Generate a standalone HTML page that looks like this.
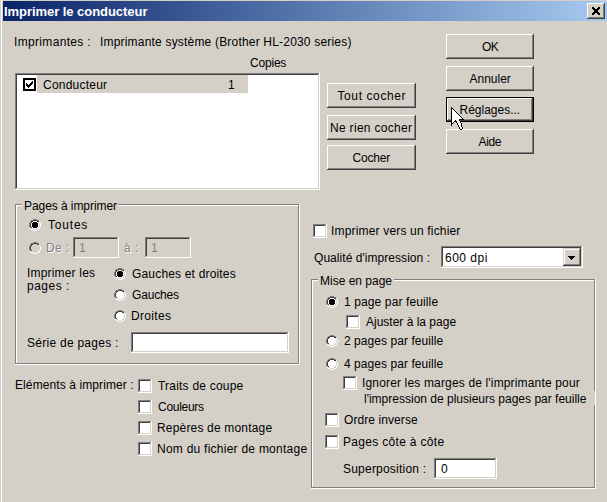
<!DOCTYPE html><html><head><meta charset="utf-8"><style>

html,body{margin:0;padding:0}
body{width:607px;height:502px;background:#D4D0C8;position:relative;overflow:hidden;font-family:'Liberation Sans', sans-serif;font-size:12px;color:#000}
.t{position:absolute;white-space:pre;line-height:13px}
.btn{position:absolute;background:#D4D0C8;box-shadow:inset -1px -1px #404040,inset 1px 1px #fff,inset -2px -2px #808080}
.sunk{position:absolute;box-shadow:inset -1px -1px #fff,inset 1px 1px #808080,inset -2px -2px #D4D0C8,inset 2px 2px #404040}
.ic{position:absolute;display:block}

</style></head><body>
<div style="position:absolute;left:1px;top:0px;width:1px;height:502px;background:#fff;"></div>
<div style="position:absolute;left:3px;top:1px;width:604px;height:20px;background:linear-gradient(to right,#0A246A,#A6CAF0)"></div>
<div class="btn" style="left:587px;top:3px;width:18px;height:16px"></div>
<svg class="ic" style="left:592px;top:7px" width="8" height="8" shape-rendering="crispEdges"><rect x="0" y="0" width="2" height="1"/><rect x="6" y="0" width="2" height="1"/><rect x="0" y="1" width="3" height="1"/><rect x="5" y="1" width="3" height="1"/><rect x="1" y="2" width="6" height="1"/><rect x="2" y="3" width="4" height="1"/><rect x="2" y="4" width="4" height="1"/><rect x="1" y="5" width="6" height="1"/><rect x="0" y="6" width="3" height="1"/><rect x="5" y="6" width="3" height="1"/><rect x="0" y="7" width="2" height="1"/><rect x="6" y="7" width="2" height="1"/></svg>
<div class="sunk" style="left:15px;top:73px;width:305px;height:117px;background:#fff"></div>
<div style="position:absolute;left:37px;top:75px;width:211px;height:18px;background:#D4D0C8;"></div>
<div style="position:absolute;left:23px;top:78px;width:13px;height:13px;background:#000;"></div>
<div style="position:absolute;left:25px;top:80px;width:9px;height:9px;background:#fff;"></div>
<svg class="ic" style="left:26px;top:81px" width="7" height="7" shape-rendering="crispEdges"><rect x="6" y="0" width="1" height="1"/><rect x="5" y="1" width="1" height="1"/><rect x="6" y="1" width="1" height="1"/><rect x="0" y="2" width="1" height="1"/><rect x="4" y="2" width="1" height="1"/><rect x="5" y="2" width="1" height="1"/><rect x="6" y="2" width="1" height="1"/><rect x="0" y="3" width="1" height="1"/><rect x="1" y="3" width="1" height="1"/><rect x="3" y="3" width="1" height="1"/><rect x="4" y="3" width="1" height="1"/><rect x="5" y="3" width="1" height="1"/><rect x="0" y="4" width="1" height="1"/><rect x="1" y="4" width="1" height="1"/><rect x="2" y="4" width="1" height="1"/><rect x="3" y="4" width="1" height="1"/><rect x="4" y="4" width="1" height="1"/><rect x="1" y="5" width="1" height="1"/><rect x="2" y="5" width="1" height="1"/><rect x="3" y="5" width="1" height="1"/><rect x="2" y="6" width="1" height="1"/></svg>
<div class="btn" style="left:327px;top:83px;width:89px;height:25px"></div>
<div class="btn" style="left:327px;top:115px;width:89px;height:25px"></div>
<div class="btn" style="left:327px;top:145px;width:89px;height:25px"></div>
<div class="btn" style="left:446px;top:34px;width:88px;height:25px"></div>
<div class="btn" style="left:446px;top:66px;width:88px;height:25px"></div>
<div class="btn" style="left:446px;top:129px;width:88px;height:25px"></div>
<div style="position:absolute;left:446px;top:97px;width:88px;height:25px;background:#000;"></div><div class="btn" style="left:447px;top:98px;width:86px;height:23px"></div>
<div style="position:absolute;left:15px;top:204px;width:284px;height:1px;background:#808080;"></div><div style="position:absolute;left:15px;top:204px;width:1px;height:160px;background:#808080;"></div><div style="position:absolute;left:15px;top:364px;width:285px;height:1px;background:#fff;"></div><div style="position:absolute;left:299px;top:204px;width:1px;height:161px;background:#fff;"></div><div style="position:absolute;left:16px;top:205px;width:282px;height:1px;background:#fff;"></div><div style="position:absolute;left:16px;top:205px;width:1px;height:158px;background:#fff;"></div><div style="position:absolute;left:16px;top:363px;width:283px;height:1px;background:#808080;"></div><div style="position:absolute;left:298px;top:205px;width:1px;height:159px;background:#808080;"></div><div style="position:absolute;left:22px;top:202px;width:96px;height:6px;background:#D4D0C8;"></div>
<svg class="ic" style="left:29px;top:219px" width="12" height="12" shape-rendering="crispEdges"><rect x="4" y="0" width="4" height="1" fill="#808080"/><rect x="2" y="1" width="2" height="1" fill="#808080"/><rect x="4" y="1" width="4" height="1" fill="#404040"/><rect x="8" y="1" width="2" height="1" fill="#808080"/><rect x="1" y="2" width="1" height="1" fill="#808080"/><rect x="2" y="2" width="2" height="1" fill="#404040"/><rect x="4" y="2" width="4" height="1" fill="#fff"/><rect x="8" y="2" width="2" height="1" fill="#404040"/><rect x="10" y="2" width="1" height="1" fill="#D4D0C8"/><rect x="1" y="3" width="1" height="1" fill="#808080"/><rect x="2" y="3" width="1" height="1" fill="#404040"/><rect x="3" y="3" width="6" height="1" fill="#fff"/><rect x="9" y="3" width="1" height="1" fill="#D4D0C8"/><rect x="10" y="3" width="1" height="1" fill="#fff"/><rect x="0" y="4" width="1" height="1" fill="#808080"/><rect x="1" y="4" width="1" height="1" fill="#404040"/><rect x="2" y="4" width="8" height="1" fill="#fff"/><rect x="10" y="4" width="1" height="1" fill="#D4D0C8"/><rect x="11" y="4" width="1" height="1" fill="#fff"/><rect x="0" y="5" width="1" height="1" fill="#808080"/><rect x="1" y="5" width="1" height="1" fill="#404040"/><rect x="2" y="5" width="8" height="1" fill="#fff"/><rect x="10" y="5" width="1" height="1" fill="#D4D0C8"/><rect x="11" y="5" width="1" height="1" fill="#fff"/><rect x="0" y="6" width="1" height="1" fill="#808080"/><rect x="1" y="6" width="1" height="1" fill="#404040"/><rect x="2" y="6" width="8" height="1" fill="#fff"/><rect x="10" y="6" width="1" height="1" fill="#D4D0C8"/><rect x="11" y="6" width="1" height="1" fill="#fff"/><rect x="0" y="7" width="1" height="1" fill="#808080"/><rect x="1" y="7" width="1" height="1" fill="#404040"/><rect x="2" y="7" width="8" height="1" fill="#fff"/><rect x="10" y="7" width="1" height="1" fill="#D4D0C8"/><rect x="11" y="7" width="1" height="1" fill="#fff"/><rect x="1" y="8" width="1" height="1" fill="#808080"/><rect x="2" y="8" width="1" height="1" fill="#404040"/><rect x="3" y="8" width="6" height="1" fill="#fff"/><rect x="9" y="8" width="1" height="1" fill="#D4D0C8"/><rect x="10" y="8" width="1" height="1" fill="#fff"/><rect x="1" y="9" width="1" height="1" fill="#fff"/><rect x="2" y="9" width="2" height="1" fill="#D4D0C8"/><rect x="4" y="9" width="4" height="1" fill="#fff"/><rect x="8" y="9" width="2" height="1" fill="#D4D0C8"/><rect x="10" y="9" width="1" height="1" fill="#fff"/><rect x="2" y="10" width="2" height="1" fill="#fff"/><rect x="4" y="10" width="4" height="1" fill="#D4D0C8"/><rect x="8" y="10" width="2" height="1" fill="#fff"/><rect x="4" y="11" width="4" height="1" fill="#fff"/><rect x="4" y="3" width="4" height="1" fill="#000"/><rect x="3" y="4" width="6" height="1" fill="#000"/><rect x="3" y="5" width="6" height="1" fill="#000"/><rect x="3" y="6" width="6" height="1" fill="#000"/><rect x="3" y="7" width="6" height="1" fill="#000"/><rect x="4" y="8" width="4" height="1" fill="#000"/></svg>
<svg class="ic" style="left:29px;top:242px" width="12" height="12" shape-rendering="crispEdges"><rect x="4" y="0" width="4" height="1" fill="#808080"/><rect x="2" y="1" width="2" height="1" fill="#808080"/><rect x="4" y="1" width="4" height="1" fill="#404040"/><rect x="8" y="1" width="2" height="1" fill="#808080"/><rect x="1" y="2" width="1" height="1" fill="#808080"/><rect x="2" y="2" width="2" height="1" fill="#404040"/><rect x="4" y="2" width="4" height="1" fill="#D4D0C8"/><rect x="8" y="2" width="2" height="1" fill="#404040"/><rect x="10" y="2" width="1" height="1" fill="#D4D0C8"/><rect x="1" y="3" width="1" height="1" fill="#808080"/><rect x="2" y="3" width="1" height="1" fill="#404040"/><rect x="3" y="3" width="6" height="1" fill="#D4D0C8"/><rect x="9" y="3" width="1" height="1" fill="#D4D0C8"/><rect x="10" y="3" width="1" height="1" fill="#fff"/><rect x="0" y="4" width="1" height="1" fill="#808080"/><rect x="1" y="4" width="1" height="1" fill="#404040"/><rect x="2" y="4" width="8" height="1" fill="#D4D0C8"/><rect x="10" y="4" width="1" height="1" fill="#D4D0C8"/><rect x="11" y="4" width="1" height="1" fill="#fff"/><rect x="0" y="5" width="1" height="1" fill="#808080"/><rect x="1" y="5" width="1" height="1" fill="#404040"/><rect x="2" y="5" width="8" height="1" fill="#D4D0C8"/><rect x="10" y="5" width="1" height="1" fill="#D4D0C8"/><rect x="11" y="5" width="1" height="1" fill="#fff"/><rect x="0" y="6" width="1" height="1" fill="#808080"/><rect x="1" y="6" width="1" height="1" fill="#404040"/><rect x="2" y="6" width="8" height="1" fill="#D4D0C8"/><rect x="10" y="6" width="1" height="1" fill="#D4D0C8"/><rect x="11" y="6" width="1" height="1" fill="#fff"/><rect x="0" y="7" width="1" height="1" fill="#808080"/><rect x="1" y="7" width="1" height="1" fill="#404040"/><rect x="2" y="7" width="8" height="1" fill="#D4D0C8"/><rect x="10" y="7" width="1" height="1" fill="#D4D0C8"/><rect x="11" y="7" width="1" height="1" fill="#fff"/><rect x="1" y="8" width="1" height="1" fill="#808080"/><rect x="2" y="8" width="1" height="1" fill="#404040"/><rect x="3" y="8" width="6" height="1" fill="#D4D0C8"/><rect x="9" y="8" width="1" height="1" fill="#D4D0C8"/><rect x="10" y="8" width="1" height="1" fill="#fff"/><rect x="1" y="9" width="1" height="1" fill="#fff"/><rect x="2" y="9" width="2" height="1" fill="#D4D0C8"/><rect x="4" y="9" width="4" height="1" fill="#D4D0C8"/><rect x="8" y="9" width="2" height="1" fill="#D4D0C8"/><rect x="10" y="9" width="1" height="1" fill="#fff"/><rect x="2" y="10" width="2" height="1" fill="#fff"/><rect x="4" y="10" width="4" height="1" fill="#D4D0C8"/><rect x="8" y="10" width="2" height="1" fill="#fff"/><rect x="4" y="11" width="4" height="1" fill="#fff"/></svg>
<div class="sunk" style="left:73px;top:237px;width:46px;height:21px;background:#D4D0C8"></div>
<div class="sunk" style="left:145px;top:237px;width:46px;height:21px;background:#D4D0C8"></div>
<svg class="ic" style="left:114px;top:268px" width="12" height="12" shape-rendering="crispEdges"><rect x="4" y="0" width="4" height="1" fill="#808080"/><rect x="2" y="1" width="2" height="1" fill="#808080"/><rect x="4" y="1" width="4" height="1" fill="#404040"/><rect x="8" y="1" width="2" height="1" fill="#808080"/><rect x="1" y="2" width="1" height="1" fill="#808080"/><rect x="2" y="2" width="2" height="1" fill="#404040"/><rect x="4" y="2" width="4" height="1" fill="#fff"/><rect x="8" y="2" width="2" height="1" fill="#404040"/><rect x="10" y="2" width="1" height="1" fill="#D4D0C8"/><rect x="1" y="3" width="1" height="1" fill="#808080"/><rect x="2" y="3" width="1" height="1" fill="#404040"/><rect x="3" y="3" width="6" height="1" fill="#fff"/><rect x="9" y="3" width="1" height="1" fill="#D4D0C8"/><rect x="10" y="3" width="1" height="1" fill="#fff"/><rect x="0" y="4" width="1" height="1" fill="#808080"/><rect x="1" y="4" width="1" height="1" fill="#404040"/><rect x="2" y="4" width="8" height="1" fill="#fff"/><rect x="10" y="4" width="1" height="1" fill="#D4D0C8"/><rect x="11" y="4" width="1" height="1" fill="#fff"/><rect x="0" y="5" width="1" height="1" fill="#808080"/><rect x="1" y="5" width="1" height="1" fill="#404040"/><rect x="2" y="5" width="8" height="1" fill="#fff"/><rect x="10" y="5" width="1" height="1" fill="#D4D0C8"/><rect x="11" y="5" width="1" height="1" fill="#fff"/><rect x="0" y="6" width="1" height="1" fill="#808080"/><rect x="1" y="6" width="1" height="1" fill="#404040"/><rect x="2" y="6" width="8" height="1" fill="#fff"/><rect x="10" y="6" width="1" height="1" fill="#D4D0C8"/><rect x="11" y="6" width="1" height="1" fill="#fff"/><rect x="0" y="7" width="1" height="1" fill="#808080"/><rect x="1" y="7" width="1" height="1" fill="#404040"/><rect x="2" y="7" width="8" height="1" fill="#fff"/><rect x="10" y="7" width="1" height="1" fill="#D4D0C8"/><rect x="11" y="7" width="1" height="1" fill="#fff"/><rect x="1" y="8" width="1" height="1" fill="#808080"/><rect x="2" y="8" width="1" height="1" fill="#404040"/><rect x="3" y="8" width="6" height="1" fill="#fff"/><rect x="9" y="8" width="1" height="1" fill="#D4D0C8"/><rect x="10" y="8" width="1" height="1" fill="#fff"/><rect x="1" y="9" width="1" height="1" fill="#fff"/><rect x="2" y="9" width="2" height="1" fill="#D4D0C8"/><rect x="4" y="9" width="4" height="1" fill="#fff"/><rect x="8" y="9" width="2" height="1" fill="#D4D0C8"/><rect x="10" y="9" width="1" height="1" fill="#fff"/><rect x="2" y="10" width="2" height="1" fill="#fff"/><rect x="4" y="10" width="4" height="1" fill="#D4D0C8"/><rect x="8" y="10" width="2" height="1" fill="#fff"/><rect x="4" y="11" width="4" height="1" fill="#fff"/><rect x="4" y="3" width="4" height="1" fill="#000"/><rect x="3" y="4" width="6" height="1" fill="#000"/><rect x="3" y="5" width="6" height="1" fill="#000"/><rect x="3" y="6" width="6" height="1" fill="#000"/><rect x="3" y="7" width="6" height="1" fill="#000"/><rect x="4" y="8" width="4" height="1" fill="#000"/></svg>
<svg class="ic" style="left:114px;top:289px" width="12" height="12" shape-rendering="crispEdges"><rect x="4" y="0" width="4" height="1" fill="#808080"/><rect x="2" y="1" width="2" height="1" fill="#808080"/><rect x="4" y="1" width="4" height="1" fill="#404040"/><rect x="8" y="1" width="2" height="1" fill="#808080"/><rect x="1" y="2" width="1" height="1" fill="#808080"/><rect x="2" y="2" width="2" height="1" fill="#404040"/><rect x="4" y="2" width="4" height="1" fill="#fff"/><rect x="8" y="2" width="2" height="1" fill="#404040"/><rect x="10" y="2" width="1" height="1" fill="#D4D0C8"/><rect x="1" y="3" width="1" height="1" fill="#808080"/><rect x="2" y="3" width="1" height="1" fill="#404040"/><rect x="3" y="3" width="6" height="1" fill="#fff"/><rect x="9" y="3" width="1" height="1" fill="#D4D0C8"/><rect x="10" y="3" width="1" height="1" fill="#fff"/><rect x="0" y="4" width="1" height="1" fill="#808080"/><rect x="1" y="4" width="1" height="1" fill="#404040"/><rect x="2" y="4" width="8" height="1" fill="#fff"/><rect x="10" y="4" width="1" height="1" fill="#D4D0C8"/><rect x="11" y="4" width="1" height="1" fill="#fff"/><rect x="0" y="5" width="1" height="1" fill="#808080"/><rect x="1" y="5" width="1" height="1" fill="#404040"/><rect x="2" y="5" width="8" height="1" fill="#fff"/><rect x="10" y="5" width="1" height="1" fill="#D4D0C8"/><rect x="11" y="5" width="1" height="1" fill="#fff"/><rect x="0" y="6" width="1" height="1" fill="#808080"/><rect x="1" y="6" width="1" height="1" fill="#404040"/><rect x="2" y="6" width="8" height="1" fill="#fff"/><rect x="10" y="6" width="1" height="1" fill="#D4D0C8"/><rect x="11" y="6" width="1" height="1" fill="#fff"/><rect x="0" y="7" width="1" height="1" fill="#808080"/><rect x="1" y="7" width="1" height="1" fill="#404040"/><rect x="2" y="7" width="8" height="1" fill="#fff"/><rect x="10" y="7" width="1" height="1" fill="#D4D0C8"/><rect x="11" y="7" width="1" height="1" fill="#fff"/><rect x="1" y="8" width="1" height="1" fill="#808080"/><rect x="2" y="8" width="1" height="1" fill="#404040"/><rect x="3" y="8" width="6" height="1" fill="#fff"/><rect x="9" y="8" width="1" height="1" fill="#D4D0C8"/><rect x="10" y="8" width="1" height="1" fill="#fff"/><rect x="1" y="9" width="1" height="1" fill="#fff"/><rect x="2" y="9" width="2" height="1" fill="#D4D0C8"/><rect x="4" y="9" width="4" height="1" fill="#fff"/><rect x="8" y="9" width="2" height="1" fill="#D4D0C8"/><rect x="10" y="9" width="1" height="1" fill="#fff"/><rect x="2" y="10" width="2" height="1" fill="#fff"/><rect x="4" y="10" width="4" height="1" fill="#D4D0C8"/><rect x="8" y="10" width="2" height="1" fill="#fff"/><rect x="4" y="11" width="4" height="1" fill="#fff"/></svg>
<svg class="ic" style="left:114px;top:310px" width="12" height="12" shape-rendering="crispEdges"><rect x="4" y="0" width="4" height="1" fill="#808080"/><rect x="2" y="1" width="2" height="1" fill="#808080"/><rect x="4" y="1" width="4" height="1" fill="#404040"/><rect x="8" y="1" width="2" height="1" fill="#808080"/><rect x="1" y="2" width="1" height="1" fill="#808080"/><rect x="2" y="2" width="2" height="1" fill="#404040"/><rect x="4" y="2" width="4" height="1" fill="#fff"/><rect x="8" y="2" width="2" height="1" fill="#404040"/><rect x="10" y="2" width="1" height="1" fill="#D4D0C8"/><rect x="1" y="3" width="1" height="1" fill="#808080"/><rect x="2" y="3" width="1" height="1" fill="#404040"/><rect x="3" y="3" width="6" height="1" fill="#fff"/><rect x="9" y="3" width="1" height="1" fill="#D4D0C8"/><rect x="10" y="3" width="1" height="1" fill="#fff"/><rect x="0" y="4" width="1" height="1" fill="#808080"/><rect x="1" y="4" width="1" height="1" fill="#404040"/><rect x="2" y="4" width="8" height="1" fill="#fff"/><rect x="10" y="4" width="1" height="1" fill="#D4D0C8"/><rect x="11" y="4" width="1" height="1" fill="#fff"/><rect x="0" y="5" width="1" height="1" fill="#808080"/><rect x="1" y="5" width="1" height="1" fill="#404040"/><rect x="2" y="5" width="8" height="1" fill="#fff"/><rect x="10" y="5" width="1" height="1" fill="#D4D0C8"/><rect x="11" y="5" width="1" height="1" fill="#fff"/><rect x="0" y="6" width="1" height="1" fill="#808080"/><rect x="1" y="6" width="1" height="1" fill="#404040"/><rect x="2" y="6" width="8" height="1" fill="#fff"/><rect x="10" y="6" width="1" height="1" fill="#D4D0C8"/><rect x="11" y="6" width="1" height="1" fill="#fff"/><rect x="0" y="7" width="1" height="1" fill="#808080"/><rect x="1" y="7" width="1" height="1" fill="#404040"/><rect x="2" y="7" width="8" height="1" fill="#fff"/><rect x="10" y="7" width="1" height="1" fill="#D4D0C8"/><rect x="11" y="7" width="1" height="1" fill="#fff"/><rect x="1" y="8" width="1" height="1" fill="#808080"/><rect x="2" y="8" width="1" height="1" fill="#404040"/><rect x="3" y="8" width="6" height="1" fill="#fff"/><rect x="9" y="8" width="1" height="1" fill="#D4D0C8"/><rect x="10" y="8" width="1" height="1" fill="#fff"/><rect x="1" y="9" width="1" height="1" fill="#fff"/><rect x="2" y="9" width="2" height="1" fill="#D4D0C8"/><rect x="4" y="9" width="4" height="1" fill="#fff"/><rect x="8" y="9" width="2" height="1" fill="#D4D0C8"/><rect x="10" y="9" width="1" height="1" fill="#fff"/><rect x="2" y="10" width="2" height="1" fill="#fff"/><rect x="4" y="10" width="4" height="1" fill="#D4D0C8"/><rect x="8" y="10" width="2" height="1" fill="#fff"/><rect x="4" y="11" width="4" height="1" fill="#fff"/></svg>
<div class="sunk" style="left:131px;top:332px;width:158px;height:21px;background:#fff"></div>
<div class="sunk" style="left:138px;top:379px;width:14px;height:14px;background:#fff"></div>
<div class="sunk" style="left:138px;top:400px;width:14px;height:14px;background:#fff"></div>
<div class="sunk" style="left:138px;top:421px;width:14px;height:14px;background:#fff"></div>
<div class="sunk" style="left:138px;top:442px;width:14px;height:14px;background:#fff"></div>
<div class="sunk" style="left:313px;top:224px;width:14px;height:14px;background:#fff"></div>
<div class="sunk" style="left:441px;top:246px;width:142px;height:22px;background:#fff"></div>
<div style="position:absolute;left:563px;top:248px;width:18px;height:18px;background:#D4D0C8;box-shadow:inset -1px -1px #404040,inset 1px 1px #D4D0C8,inset -2px -2px #808080,inset 2px 2px #fff"></div>
<svg class="ic" style="left:568px;top:256px" width="7" height="4" shape-rendering="crispEdges"><rect x="0" y="0" width="7" height="1"/><rect x="1" y="1" width="5" height="1"/><rect x="2" y="2" width="3" height="1"/><rect x="3" y="3" width="1" height="1"/></svg>
<div style="position:absolute;left:311px;top:279px;width:284px;height:1px;background:#808080;"></div><div style="position:absolute;left:311px;top:279px;width:1px;height:209px;background:#808080;"></div><div style="position:absolute;left:311px;top:488px;width:285px;height:1px;background:#fff;"></div><div style="position:absolute;left:595px;top:279px;width:1px;height:210px;background:#fff;"></div><div style="position:absolute;left:312px;top:280px;width:282px;height:1px;background:#fff;"></div><div style="position:absolute;left:312px;top:280px;width:1px;height:207px;background:#fff;"></div><div style="position:absolute;left:312px;top:487px;width:283px;height:1px;background:#808080;"></div><div style="position:absolute;left:594px;top:280px;width:1px;height:208px;background:#808080;"></div><div style="position:absolute;left:318px;top:277px;width:76px;height:6px;background:#D4D0C8;"></div>
<svg class="ic" style="left:326px;top:296px" width="12" height="12" shape-rendering="crispEdges"><rect x="4" y="0" width="4" height="1" fill="#808080"/><rect x="2" y="1" width="2" height="1" fill="#808080"/><rect x="4" y="1" width="4" height="1" fill="#404040"/><rect x="8" y="1" width="2" height="1" fill="#808080"/><rect x="1" y="2" width="1" height="1" fill="#808080"/><rect x="2" y="2" width="2" height="1" fill="#404040"/><rect x="4" y="2" width="4" height="1" fill="#fff"/><rect x="8" y="2" width="2" height="1" fill="#404040"/><rect x="10" y="2" width="1" height="1" fill="#D4D0C8"/><rect x="1" y="3" width="1" height="1" fill="#808080"/><rect x="2" y="3" width="1" height="1" fill="#404040"/><rect x="3" y="3" width="6" height="1" fill="#fff"/><rect x="9" y="3" width="1" height="1" fill="#D4D0C8"/><rect x="10" y="3" width="1" height="1" fill="#fff"/><rect x="0" y="4" width="1" height="1" fill="#808080"/><rect x="1" y="4" width="1" height="1" fill="#404040"/><rect x="2" y="4" width="8" height="1" fill="#fff"/><rect x="10" y="4" width="1" height="1" fill="#D4D0C8"/><rect x="11" y="4" width="1" height="1" fill="#fff"/><rect x="0" y="5" width="1" height="1" fill="#808080"/><rect x="1" y="5" width="1" height="1" fill="#404040"/><rect x="2" y="5" width="8" height="1" fill="#fff"/><rect x="10" y="5" width="1" height="1" fill="#D4D0C8"/><rect x="11" y="5" width="1" height="1" fill="#fff"/><rect x="0" y="6" width="1" height="1" fill="#808080"/><rect x="1" y="6" width="1" height="1" fill="#404040"/><rect x="2" y="6" width="8" height="1" fill="#fff"/><rect x="10" y="6" width="1" height="1" fill="#D4D0C8"/><rect x="11" y="6" width="1" height="1" fill="#fff"/><rect x="0" y="7" width="1" height="1" fill="#808080"/><rect x="1" y="7" width="1" height="1" fill="#404040"/><rect x="2" y="7" width="8" height="1" fill="#fff"/><rect x="10" y="7" width="1" height="1" fill="#D4D0C8"/><rect x="11" y="7" width="1" height="1" fill="#fff"/><rect x="1" y="8" width="1" height="1" fill="#808080"/><rect x="2" y="8" width="1" height="1" fill="#404040"/><rect x="3" y="8" width="6" height="1" fill="#fff"/><rect x="9" y="8" width="1" height="1" fill="#D4D0C8"/><rect x="10" y="8" width="1" height="1" fill="#fff"/><rect x="1" y="9" width="1" height="1" fill="#fff"/><rect x="2" y="9" width="2" height="1" fill="#D4D0C8"/><rect x="4" y="9" width="4" height="1" fill="#fff"/><rect x="8" y="9" width="2" height="1" fill="#D4D0C8"/><rect x="10" y="9" width="1" height="1" fill="#fff"/><rect x="2" y="10" width="2" height="1" fill="#fff"/><rect x="4" y="10" width="4" height="1" fill="#D4D0C8"/><rect x="8" y="10" width="2" height="1" fill="#fff"/><rect x="4" y="11" width="4" height="1" fill="#fff"/><rect x="4" y="3" width="4" height="1" fill="#000"/><rect x="3" y="4" width="6" height="1" fill="#000"/><rect x="3" y="5" width="6" height="1" fill="#000"/><rect x="3" y="6" width="6" height="1" fill="#000"/><rect x="3" y="7" width="6" height="1" fill="#000"/><rect x="4" y="8" width="4" height="1" fill="#000"/></svg>
<div class="sunk" style="left:346px;top:315px;width:14px;height:14px;background:#fff"></div>
<svg class="ic" style="left:326px;top:335px" width="12" height="12" shape-rendering="crispEdges"><rect x="4" y="0" width="4" height="1" fill="#808080"/><rect x="2" y="1" width="2" height="1" fill="#808080"/><rect x="4" y="1" width="4" height="1" fill="#404040"/><rect x="8" y="1" width="2" height="1" fill="#808080"/><rect x="1" y="2" width="1" height="1" fill="#808080"/><rect x="2" y="2" width="2" height="1" fill="#404040"/><rect x="4" y="2" width="4" height="1" fill="#fff"/><rect x="8" y="2" width="2" height="1" fill="#404040"/><rect x="10" y="2" width="1" height="1" fill="#D4D0C8"/><rect x="1" y="3" width="1" height="1" fill="#808080"/><rect x="2" y="3" width="1" height="1" fill="#404040"/><rect x="3" y="3" width="6" height="1" fill="#fff"/><rect x="9" y="3" width="1" height="1" fill="#D4D0C8"/><rect x="10" y="3" width="1" height="1" fill="#fff"/><rect x="0" y="4" width="1" height="1" fill="#808080"/><rect x="1" y="4" width="1" height="1" fill="#404040"/><rect x="2" y="4" width="8" height="1" fill="#fff"/><rect x="10" y="4" width="1" height="1" fill="#D4D0C8"/><rect x="11" y="4" width="1" height="1" fill="#fff"/><rect x="0" y="5" width="1" height="1" fill="#808080"/><rect x="1" y="5" width="1" height="1" fill="#404040"/><rect x="2" y="5" width="8" height="1" fill="#fff"/><rect x="10" y="5" width="1" height="1" fill="#D4D0C8"/><rect x="11" y="5" width="1" height="1" fill="#fff"/><rect x="0" y="6" width="1" height="1" fill="#808080"/><rect x="1" y="6" width="1" height="1" fill="#404040"/><rect x="2" y="6" width="8" height="1" fill="#fff"/><rect x="10" y="6" width="1" height="1" fill="#D4D0C8"/><rect x="11" y="6" width="1" height="1" fill="#fff"/><rect x="0" y="7" width="1" height="1" fill="#808080"/><rect x="1" y="7" width="1" height="1" fill="#404040"/><rect x="2" y="7" width="8" height="1" fill="#fff"/><rect x="10" y="7" width="1" height="1" fill="#D4D0C8"/><rect x="11" y="7" width="1" height="1" fill="#fff"/><rect x="1" y="8" width="1" height="1" fill="#808080"/><rect x="2" y="8" width="1" height="1" fill="#404040"/><rect x="3" y="8" width="6" height="1" fill="#fff"/><rect x="9" y="8" width="1" height="1" fill="#D4D0C8"/><rect x="10" y="8" width="1" height="1" fill="#fff"/><rect x="1" y="9" width="1" height="1" fill="#fff"/><rect x="2" y="9" width="2" height="1" fill="#D4D0C8"/><rect x="4" y="9" width="4" height="1" fill="#fff"/><rect x="8" y="9" width="2" height="1" fill="#D4D0C8"/><rect x="10" y="9" width="1" height="1" fill="#fff"/><rect x="2" y="10" width="2" height="1" fill="#fff"/><rect x="4" y="10" width="4" height="1" fill="#D4D0C8"/><rect x="8" y="10" width="2" height="1" fill="#fff"/><rect x="4" y="11" width="4" height="1" fill="#fff"/></svg>
<svg class="ic" style="left:326px;top:358px" width="12" height="12" shape-rendering="crispEdges"><rect x="4" y="0" width="4" height="1" fill="#808080"/><rect x="2" y="1" width="2" height="1" fill="#808080"/><rect x="4" y="1" width="4" height="1" fill="#404040"/><rect x="8" y="1" width="2" height="1" fill="#808080"/><rect x="1" y="2" width="1" height="1" fill="#808080"/><rect x="2" y="2" width="2" height="1" fill="#404040"/><rect x="4" y="2" width="4" height="1" fill="#fff"/><rect x="8" y="2" width="2" height="1" fill="#404040"/><rect x="10" y="2" width="1" height="1" fill="#D4D0C8"/><rect x="1" y="3" width="1" height="1" fill="#808080"/><rect x="2" y="3" width="1" height="1" fill="#404040"/><rect x="3" y="3" width="6" height="1" fill="#fff"/><rect x="9" y="3" width="1" height="1" fill="#D4D0C8"/><rect x="10" y="3" width="1" height="1" fill="#fff"/><rect x="0" y="4" width="1" height="1" fill="#808080"/><rect x="1" y="4" width="1" height="1" fill="#404040"/><rect x="2" y="4" width="8" height="1" fill="#fff"/><rect x="10" y="4" width="1" height="1" fill="#D4D0C8"/><rect x="11" y="4" width="1" height="1" fill="#fff"/><rect x="0" y="5" width="1" height="1" fill="#808080"/><rect x="1" y="5" width="1" height="1" fill="#404040"/><rect x="2" y="5" width="8" height="1" fill="#fff"/><rect x="10" y="5" width="1" height="1" fill="#D4D0C8"/><rect x="11" y="5" width="1" height="1" fill="#fff"/><rect x="0" y="6" width="1" height="1" fill="#808080"/><rect x="1" y="6" width="1" height="1" fill="#404040"/><rect x="2" y="6" width="8" height="1" fill="#fff"/><rect x="10" y="6" width="1" height="1" fill="#D4D0C8"/><rect x="11" y="6" width="1" height="1" fill="#fff"/><rect x="0" y="7" width="1" height="1" fill="#808080"/><rect x="1" y="7" width="1" height="1" fill="#404040"/><rect x="2" y="7" width="8" height="1" fill="#fff"/><rect x="10" y="7" width="1" height="1" fill="#D4D0C8"/><rect x="11" y="7" width="1" height="1" fill="#fff"/><rect x="1" y="8" width="1" height="1" fill="#808080"/><rect x="2" y="8" width="1" height="1" fill="#404040"/><rect x="3" y="8" width="6" height="1" fill="#fff"/><rect x="9" y="8" width="1" height="1" fill="#D4D0C8"/><rect x="10" y="8" width="1" height="1" fill="#fff"/><rect x="1" y="9" width="1" height="1" fill="#fff"/><rect x="2" y="9" width="2" height="1" fill="#D4D0C8"/><rect x="4" y="9" width="4" height="1" fill="#fff"/><rect x="8" y="9" width="2" height="1" fill="#D4D0C8"/><rect x="10" y="9" width="1" height="1" fill="#fff"/><rect x="2" y="10" width="2" height="1" fill="#fff"/><rect x="4" y="10" width="4" height="1" fill="#D4D0C8"/><rect x="8" y="10" width="2" height="1" fill="#fff"/><rect x="4" y="11" width="4" height="1" fill="#fff"/></svg>
<div class="sunk" style="left:343px;top:376px;width:14px;height:14px;background:#fff"></div>
<div style="position:absolute;left:594px;top:391px;width:1px;height:14px;background:#D4D0C8;"></div>
<div class="sunk" style="left:325px;top:413px;width:14px;height:14px;background:#fff"></div>
<div class="sunk" style="left:325px;top:435px;width:14px;height:14px;background:#fff"></div>
<div class="sunk" style="left:434px;top:458px;width:63px;height:21px;background:#fff"></div>
<div class="t" style="left:4.00px;top:5px;letter-spacing:-0.048px;font-size:13px;font-weight:bold;color:#fff;">Imprimer le conducteur</div>
<div class="t" style="left:14.00px;top:36px;letter-spacing:0.333px;">Imprimantes :</div>
<div class="t" style="left:100.00px;top:36px;letter-spacing:0.190px;">Imprimante système (Brother HL-2030 series)</div>
<div class="t" style="left:250.00px;top:57px;letter-spacing:-0.200px;">Copies</div>
<div class="t" style="left:43.00px;top:79px;letter-spacing:0.222px;">Conducteur</div>
<div class="t" style="left:228.00px;top:79px;letter-spacing:1.000px;">1</div>
<div class="t" style="left:337.50px;top:90px;letter-spacing:0.600px;">Tout cocher</div>
<div class="t" style="left:330.00px;top:122px;letter-spacing:0.308px;">Ne rien cocher</div>
<div class="t" style="left:352.50px;top:152px;letter-spacing:-0.200px;">Cocher</div>
<div class="t" style="left:482.00px;top:41px;letter-spacing:-0.500px;">OK</div>
<div class="t" style="left:469.50px;top:73px;letter-spacing:0.000px;">Annuler</div>
<div class="t" style="left:459.50px;top:104px;letter-spacing:0.000px;">Réglages...</div>
<div class="t" style="left:478.50px;top:136px;letter-spacing:-0.333px;">Aide</div>
<div class="t" style="left:24.00px;top:200px;letter-spacing:-0.067px;">Pages à imprimer</div>
<div class="t" style="left:48.00px;top:219px;letter-spacing:0.800px;">Toutes</div>
<div class="t" style="left:47.00px;top:243px;letter-spacing:0.333px;color:#fff">De :</div><div class="t" style="left:46.00px;top:242px;letter-spacing:0.333px;color:#808080;">De :</div>
<div class="t" style="left:79.00px;top:242px;letter-spacing:0.000px;color:#808080;">1</div>
<div class="t" style="left:125.00px;top:243px;letter-spacing:0.500px;color:#fff">à :</div><div class="t" style="left:124.00px;top:242px;letter-spacing:0.500px;color:#808080;">à :</div>
<div class="t" style="left:151.00px;top:242px;letter-spacing:1.000px;color:#808080;">1</div>
<div class="t" style="left:27.00px;top:267px;letter-spacing:0.182px;">Imprimer les</div>
<div class="t" style="left:27.00px;top:280px;letter-spacing:0.500px;">pages :</div>
<div class="t" style="left:132.00px;top:268px;letter-spacing:0.176px;">Gauches et droites</div>
<div class="t" style="left:132.00px;top:289px;letter-spacing:-0.167px;">Gauches</div>
<div class="t" style="left:131.00px;top:310px;letter-spacing:0.333px;">Droites</div>
<div class="t" style="left:27.00px;top:337px;letter-spacing:0.267px;">Série de pages :</div>
<div class="t" style="left:15.00px;top:379px;letter-spacing:0.100px;">Eléments à imprimer :</div>
<div class="t" style="left:158.00px;top:380px;letter-spacing:0.214px;">Traits de coupe</div>
<div class="t" style="left:158.00px;top:401px;letter-spacing:-0.286px;">Couleurs</div>
<div class="t" style="left:157.00px;top:422px;letter-spacing:0.176px;">Repères de montage</div>
<div class="t" style="left:157.00px;top:443px;letter-spacing:0.250px;">Nom du fichier de montage</div>
<div class="t" style="left:331.00px;top:225px;letter-spacing:0.174px;">Imprimer vers un fichier</div>
<div class="t" style="left:314.00px;top:252px;letter-spacing:0.048px;">Qualité d'impression :</div>
<div class="t" style="left:445.00px;top:252px;letter-spacing:0.500px;">600 dpi</div>
<div class="t" style="left:320.00px;top:275px;letter-spacing:0.000px;">Mise en page</div>
<div class="t" style="left:344.00px;top:296px;letter-spacing:0.118px;">1 page par feuille</div>
<div class="t" style="left:366.00px;top:316px;letter-spacing:0.000px;">Ajuster à la page</div>
<div class="t" style="left:344.00px;top:335px;letter-spacing:0.056px;">2 pages par feuille</div>
<div class="t" style="left:344.00px;top:358px;letter-spacing:0.056px;">4 pages par feuille</div>
<div class="t" style="left:362.00px;top:377px;letter-spacing:0.158px;">Ignorer les marges de l'imprimante pour</div>
<div class="t" style="left:364.00px;top:393px;letter-spacing:0.000px;">l'impression de plusieurs pages par feuille</div>
<div class="t" style="left:344.00px;top:414px;letter-spacing:0.083px;">Ordre inverse</div>
<div class="t" style="left:343.00px;top:436px;letter-spacing:0.312px;">Pages côte à côte</div>
<div class="t" style="left:343.00px;top:463px;letter-spacing:0.214px;">Superposition :</div>
<div class="t" style="left:441.00px;top:463px;letter-spacing:0.000px;">0</div>
<svg class="ic" style="left:451px;top:107px" width="13" height="23" shape-rendering="crispEdges"><rect x="0" y="0" width="1" height="1" fill="#000"/><rect x="0" y="1" width="1" height="1" fill="#000"/><rect x="1" y="1" width="1" height="1" fill="#000"/><rect x="0" y="2" width="1" height="1" fill="#000"/><rect x="1" y="2" width="1" height="1" fill="#fff"/><rect x="2" y="2" width="1" height="1" fill="#000"/><rect x="0" y="3" width="1" height="1" fill="#000"/><rect x="1" y="3" width="1" height="1" fill="#fff"/><rect x="2" y="3" width="1" height="1" fill="#fff"/><rect x="3" y="3" width="1" height="1" fill="#000"/><rect x="0" y="4" width="1" height="1" fill="#000"/><rect x="1" y="4" width="1" height="1" fill="#fff"/><rect x="2" y="4" width="1" height="1" fill="#fff"/><rect x="3" y="4" width="1" height="1" fill="#fff"/><rect x="4" y="4" width="1" height="1" fill="#000"/><rect x="0" y="5" width="1" height="1" fill="#000"/><rect x="1" y="5" width="1" height="1" fill="#fff"/><rect x="2" y="5" width="1" height="1" fill="#fff"/><rect x="3" y="5" width="1" height="1" fill="#fff"/><rect x="4" y="5" width="1" height="1" fill="#fff"/><rect x="5" y="5" width="1" height="1" fill="#000"/><rect x="0" y="6" width="1" height="1" fill="#000"/><rect x="1" y="6" width="1" height="1" fill="#fff"/><rect x="2" y="6" width="1" height="1" fill="#fff"/><rect x="3" y="6" width="1" height="1" fill="#fff"/><rect x="4" y="6" width="1" height="1" fill="#fff"/><rect x="5" y="6" width="1" height="1" fill="#fff"/><rect x="6" y="6" width="1" height="1" fill="#000"/><rect x="0" y="7" width="1" height="1" fill="#000"/><rect x="1" y="7" width="1" height="1" fill="#fff"/><rect x="2" y="7" width="1" height="1" fill="#fff"/><rect x="3" y="7" width="1" height="1" fill="#fff"/><rect x="4" y="7" width="1" height="1" fill="#fff"/><rect x="5" y="7" width="1" height="1" fill="#fff"/><rect x="6" y="7" width="1" height="1" fill="#fff"/><rect x="7" y="7" width="1" height="1" fill="#000"/><rect x="0" y="8" width="1" height="1" fill="#000"/><rect x="1" y="8" width="1" height="1" fill="#fff"/><rect x="2" y="8" width="1" height="1" fill="#fff"/><rect x="3" y="8" width="1" height="1" fill="#fff"/><rect x="4" y="8" width="1" height="1" fill="#fff"/><rect x="5" y="8" width="1" height="1" fill="#fff"/><rect x="6" y="8" width="1" height="1" fill="#fff"/><rect x="7" y="8" width="1" height="1" fill="#fff"/><rect x="8" y="8" width="1" height="1" fill="#000"/><rect x="0" y="9" width="1" height="1" fill="#000"/><rect x="1" y="9" width="1" height="1" fill="#fff"/><rect x="2" y="9" width="1" height="1" fill="#fff"/><rect x="3" y="9" width="1" height="1" fill="#fff"/><rect x="4" y="9" width="1" height="1" fill="#fff"/><rect x="5" y="9" width="1" height="1" fill="#fff"/><rect x="6" y="9" width="1" height="1" fill="#fff"/><rect x="7" y="9" width="1" height="1" fill="#fff"/><rect x="8" y="9" width="1" height="1" fill="#fff"/><rect x="9" y="9" width="1" height="1" fill="#000"/><rect x="0" y="10" width="1" height="1" fill="#000"/><rect x="1" y="10" width="1" height="1" fill="#fff"/><rect x="2" y="10" width="1" height="1" fill="#fff"/><rect x="3" y="10" width="1" height="1" fill="#fff"/><rect x="4" y="10" width="1" height="1" fill="#fff"/><rect x="5" y="10" width="1" height="1" fill="#fff"/><rect x="6" y="10" width="1" height="1" fill="#fff"/><rect x="7" y="10" width="1" height="1" fill="#fff"/><rect x="8" y="10" width="1" height="1" fill="#fff"/><rect x="9" y="10" width="1" height="1" fill="#fff"/><rect x="10" y="10" width="1" height="1" fill="#000"/><rect x="0" y="11" width="1" height="1" fill="#000"/><rect x="1" y="11" width="1" height="1" fill="#fff"/><rect x="2" y="11" width="1" height="1" fill="#fff"/><rect x="3" y="11" width="1" height="1" fill="#fff"/><rect x="4" y="11" width="1" height="1" fill="#fff"/><rect x="5" y="11" width="1" height="1" fill="#fff"/><rect x="6" y="11" width="1" height="1" fill="#fff"/><rect x="7" y="11" width="1" height="1" fill="#fff"/><rect x="8" y="11" width="1" height="1" fill="#fff"/><rect x="9" y="11" width="1" height="1" fill="#fff"/><rect x="10" y="11" width="1" height="1" fill="#fff"/><rect x="11" y="11" width="1" height="1" fill="#000"/><rect x="0" y="12" width="1" height="1" fill="#000"/><rect x="1" y="12" width="1" height="1" fill="#fff"/><rect x="2" y="12" width="1" height="1" fill="#fff"/><rect x="3" y="12" width="1" height="1" fill="#fff"/><rect x="4" y="12" width="1" height="1" fill="#fff"/><rect x="5" y="12" width="1" height="1" fill="#fff"/><rect x="6" y="12" width="1" height="1" fill="#fff"/><rect x="7" y="12" width="1" height="1" fill="#fff"/><rect x="8" y="12" width="1" height="1" fill="#000"/><rect x="9" y="12" width="1" height="1" fill="#000"/><rect x="10" y="12" width="1" height="1" fill="#000"/><rect x="11" y="12" width="1" height="1" fill="#000"/><rect x="12" y="12" width="1" height="1" fill="#000"/><rect x="0" y="13" width="1" height="1" fill="#000"/><rect x="1" y="13" width="1" height="1" fill="#fff"/><rect x="2" y="13" width="1" height="1" fill="#fff"/><rect x="3" y="13" width="1" height="1" fill="#fff"/><rect x="4" y="13" width="1" height="1" fill="#000"/><rect x="5" y="13" width="1" height="1" fill="#fff"/><rect x="6" y="13" width="1" height="1" fill="#fff"/><rect x="7" y="13" width="1" height="1" fill="#fff"/><rect x="8" y="13" width="1" height="1" fill="#000"/><rect x="0" y="14" width="1" height="1" fill="#000"/><rect x="1" y="14" width="1" height="1" fill="#fff"/><rect x="2" y="14" width="1" height="1" fill="#fff"/><rect x="3" y="14" width="1" height="1" fill="#000"/><rect x="5" y="14" width="1" height="1" fill="#000"/><rect x="6" y="14" width="1" height="1" fill="#fff"/><rect x="7" y="14" width="1" height="1" fill="#fff"/><rect x="8" y="14" width="1" height="1" fill="#fff"/><rect x="9" y="14" width="1" height="1" fill="#000"/><rect x="0" y="15" width="1" height="1" fill="#000"/><rect x="1" y="15" width="1" height="1" fill="#fff"/><rect x="2" y="15" width="1" height="1" fill="#000"/><rect x="5" y="15" width="1" height="1" fill="#000"/><rect x="6" y="15" width="1" height="1" fill="#fff"/><rect x="7" y="15" width="1" height="1" fill="#fff"/><rect x="8" y="15" width="1" height="1" fill="#fff"/><rect x="9" y="15" width="1" height="1" fill="#000"/><rect x="0" y="16" width="1" height="1" fill="#000"/><rect x="1" y="16" width="1" height="1" fill="#000"/><rect x="6" y="16" width="1" height="1" fill="#000"/><rect x="7" y="16" width="1" height="1" fill="#fff"/><rect x="8" y="16" width="1" height="1" fill="#fff"/><rect x="9" y="16" width="1" height="1" fill="#fff"/><rect x="10" y="16" width="1" height="1" fill="#000"/><rect x="0" y="17" width="1" height="1" fill="#000"/><rect x="6" y="17" width="1" height="1" fill="#000"/><rect x="7" y="17" width="1" height="1" fill="#fff"/><rect x="8" y="17" width="1" height="1" fill="#fff"/><rect x="9" y="17" width="1" height="1" fill="#fff"/><rect x="10" y="17" width="1" height="1" fill="#000"/><rect x="0" y="18" width="1" height="1" fill="#000"/><rect x="7" y="18" width="1" height="1" fill="#000"/><rect x="8" y="18" width="1" height="1" fill="#fff"/><rect x="9" y="18" width="1" height="1" fill="#fff"/><rect x="10" y="18" width="1" height="1" fill="#000"/><rect x="7" y="19" width="1" height="1" fill="#000"/><rect x="8" y="19" width="1" height="1" fill="#fff"/><rect x="9" y="19" width="1" height="1" fill="#fff"/><rect x="10" y="19" width="1" height="1" fill="#000"/><rect x="8" y="20" width="1" height="1" fill="#000"/><rect x="9" y="20" width="1" height="1" fill="#fff"/><rect x="10" y="20" width="1" height="1" fill="#fff"/><rect x="11" y="20" width="1" height="1" fill="#000"/><rect x="8" y="21" width="1" height="1" fill="#000"/><rect x="9" y="21" width="1" height="1" fill="#fff"/><rect x="10" y="21" width="1" height="1" fill="#fff"/><rect x="11" y="21" width="1" height="1" fill="#000"/><rect x="9" y="22" width="1" height="1" fill="#000"/><rect x="10" y="22" width="1" height="1" fill="#000"/></svg>
</body></html>
